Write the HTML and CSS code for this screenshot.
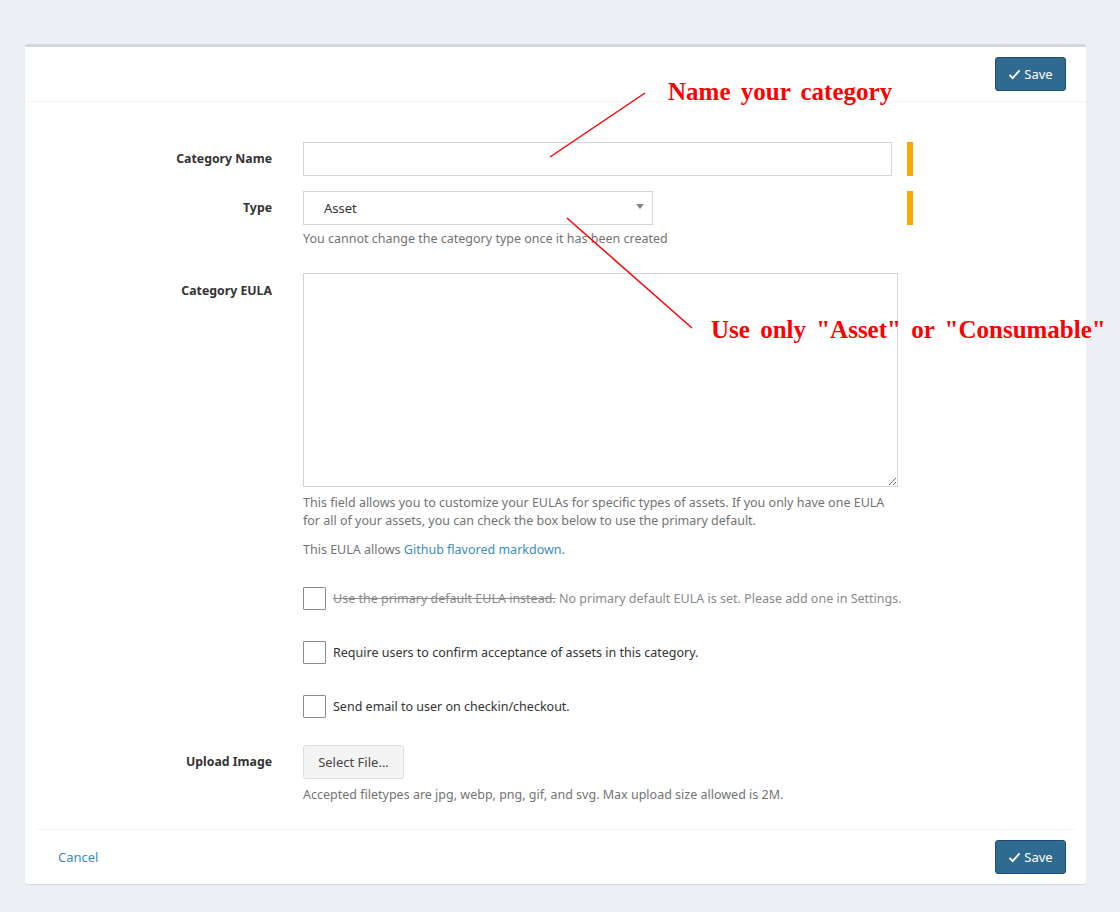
FILE: index.html
```html
<!DOCTYPE html>
<html>
<head>
<meta charset="utf-8">
<link rel="stylesheet" href="styles.css">
</head>
<body>
<div class="box">
  <div class="box-header">
    <button class="btn-save"><svg class="check" viewBox="0 0 14 12" width="13" height="11"><path d="M1.5 6.5 L5 10 L12.5 1.5" fill="none" stroke="#fff" stroke-width="2"/></svg>Save</button>
  </div>
  <div class="box-body">
    <div class="row r-name">
      <label class="lbl">Category Name</label>
      <div class="field"><input class="input name-input" type="text"></div>
      <span class="req"></span>
    </div>
    <div class="row r-type">
      <label class="lbl">Type</label>
      <div class="field">
        <div class="select">Asset<span class="caret"></span></div>
        <p class="help">You cannot change the category type once it has been created</p>
      </div>
      <span class="req"></span>
    </div>
    <div class="row r-eula">
      <label class="lbl lbl-top">Category EULA</label>
      <div class="field">
        <textarea class="textarea"></textarea>
        <p class="help help-eula">This field allows you to customize your EULAs for specific types of assets. If you only have one EULA for all of your assets, you can check the box below to use the primary default.</p>
        <p class="help help-md">This EULA allows <a href="#">Github flavored markdown</a>.</p>
      </div>
    </div>
    <div class="row r-check first">
      <div class="lbl"></div>
      <div class="field check-line muted"><span class="cbox"></span><span><s>Use the primary default EULA instead.</s> No primary default EULA is set. Please add one in Settings.</span></div>
    </div>
    <div class="row r-check">
      <div class="lbl"></div>
      <div class="field check-line"><span class="cbox"></span><span>Require users to confirm acceptance of assets in this category.</span></div>
    </div>
    <div class="row r-check">
      <div class="lbl"></div>
      <div class="field check-line"><span class="cbox"></span><span>Send email to user on checkin/checkout.</span></div>
    </div>
    <div class="row r-upload">
      <label class="lbl">Upload Image</label>
      <div class="field">
        <button class="btn-file">Select File...</button>
        <p class="help">Accepted filetypes are jpg, webp, png, gif, and svg. Max upload size allowed is 2M.</p>
      </div>
    </div>
  </div>
  <div class="box-footer">
    <a class="cancel" href="#">Cancel</a>
    <button class="btn-save"><svg class="check" viewBox="0 0 14 12" width="13" height="11"><path d="M1.5 6.5 L5 10 L12.5 1.5" fill="none" stroke="#fff" stroke-width="2"/></svg>Save</button>
  </div>
</div>
<svg class="annot-lines" width="1120" height="912" viewBox="0 0 1120 912">
  <line x1="645" y1="93" x2="550" y2="157" stroke="#ff0000" stroke-width="1.5"/>
  <line x1="567" y1="218" x2="692" y2="328" stroke="#ff0000" stroke-width="1.5"/>
</svg>
<div class="annot a1">Name your category</div>
<div class="annot a2">Use only "Asset" or "Consumable"</div>
</body>
</html>
```

FILE: styles.css
```css
html, body {
  margin: 0;
  padding: 0;
}
body {
  background: #ecf0f5;
  font-family: "Noto Sans", "Open Sans", sans-serif;
  font-size: 13px;
  color: #333;
  padding: 44px 34px 0 25px;
  height: 912px;
  box-sizing: border-box;
  position: relative;
  overflow: hidden;
}
.box {
  background: #fff;
  border-top: 3px solid #d2d6de;
  border-radius: 3px;
  box-shadow: 0 1px 1px rgba(0,0,0,0.1);
}
.box-header {
  display: flex;
  justify-content: flex-end;
  padding: 10px 20px 10px;
  border-bottom: 1px solid #f4f4f4;
}
.btn-save {
  display: flex;
  align-items: center;
  gap: 3px;
  height: 34px;
  width: 71px;
  justify-content: center;
  background: #2f6b90;
  border: 1px solid #204d6d;
  border-radius: 3px;
  color: #fff;
  font-family: inherit;
  font-size: 13px;
  padding: 0 8px;
}
.check { display: block; }
.box-body {
  padding: 40px 0 0;
}
.row {
  display: flex;
  align-items: flex-start;
}
.lbl {
  width: 247px;
  flex: none;
  text-align: right;
  font-weight: bold;
  font-size: 12.3px;
  line-height: 34px;
  margin-right: 31px;
}
.lbl-top { line-height: 18px; padding-top: 9px; }
.field { flex: none; }
.input {
  display: block;
  width: 589px;
  height: 34px;
  box-sizing: border-box;
  border: 1px solid #d2d6de;
  border-radius: 0;
  margin: 0;
}
.req {
  display: block;
  width: 6px;
  height: 34px;
  background: #ffa500;
  margin-left: 15px;
}
.r-name { margin-bottom: 15px; }
.r-type .field { width: 589px; }
.select {
  position: relative;
  width: 350px;
  height: 34px;
  box-sizing: border-box;
  border: 1px solid #d2d6de;
  padding-left: 20px;
  line-height: 32px;
  font-size: 13px;
}
.caret {
  position: absolute;
  right: 8px;
  top: 12px;
  border-left: 4px solid transparent;
  border-right: 4px solid transparent;
  border-top: 5px solid #888;
}
.help {
  margin: 0;
  color: #737373;
  font-size: 12.5px;
  line-height: 18px;
}
.r-type .help { margin-top: 5px; }
.r-eula { margin-top: 25px; }
.textarea {
  display: block;
  width: 595px;
  height: 214px;
  box-sizing: border-box;
  border: 1px solid #d2d6de;
  margin: 0;
  resize: vertical;
}
.help-eula { margin-top: 7px; width: 600px; }
.help-md { margin-top: 11px; }
.help a { color: #3c8dbc; text-decoration: none; }
.r-check { margin-top: 24px; }
.r-check.first { margin-top: 28px; }
.r-check + .r-check { margin-top: 31px; }
.check-line {
  display: flex;
  align-items: center;
  gap: 7px;
  height: 23px;
  font-size: 12.5px;
}
.cbox {
  display: block;
  width: 21px;
  height: 21px;
  border: 1px solid #8c8c8c;
  border-radius: 1px;
  background: #fff;
}
.muted { color: #8a8a8a; }
.muted s { color: #8a8a8a; }
.r-check .lbl { line-height: 23px; }
.r-upload { margin-top: 27px; }
.btn-file {
  display: block;
  width: 101px;
  height: 34px;
  border: 1px solid #ddd;
  background: #f4f4f4;
  border-radius: 3px;
  font-family: inherit;
  font-size: 13px;
  color: #444;
  padding: 0;
}
.r-upload .help { margin-top: 7px; }
.box-footer {
  display: flex;
  justify-content: space-between;
  align-items: center;
  margin: 25px 11px 0;
  border-top: 1px solid #f4f4f4;
  padding: 10px 9px 10px 22px;
}
.cancel {
  color: #3c8dbc;
  text-decoration: none;
  font-size: 13px;
}
.annot-lines {
  position: absolute;
  left: 0;
  top: 0;
  pointer-events: none;
}
.annot {
  position: absolute;
  font-family: "Liberation Serif", serif;
  font-weight: bold;
  color: #ff0000;
  font-size: 25px;
  word-spacing: 4px;
  white-space: nowrap;
  line-height: 30px;
}
.a1 { left: 668px; top: 77px; }
.a2 { left: 711px; top: 315px; }
```
